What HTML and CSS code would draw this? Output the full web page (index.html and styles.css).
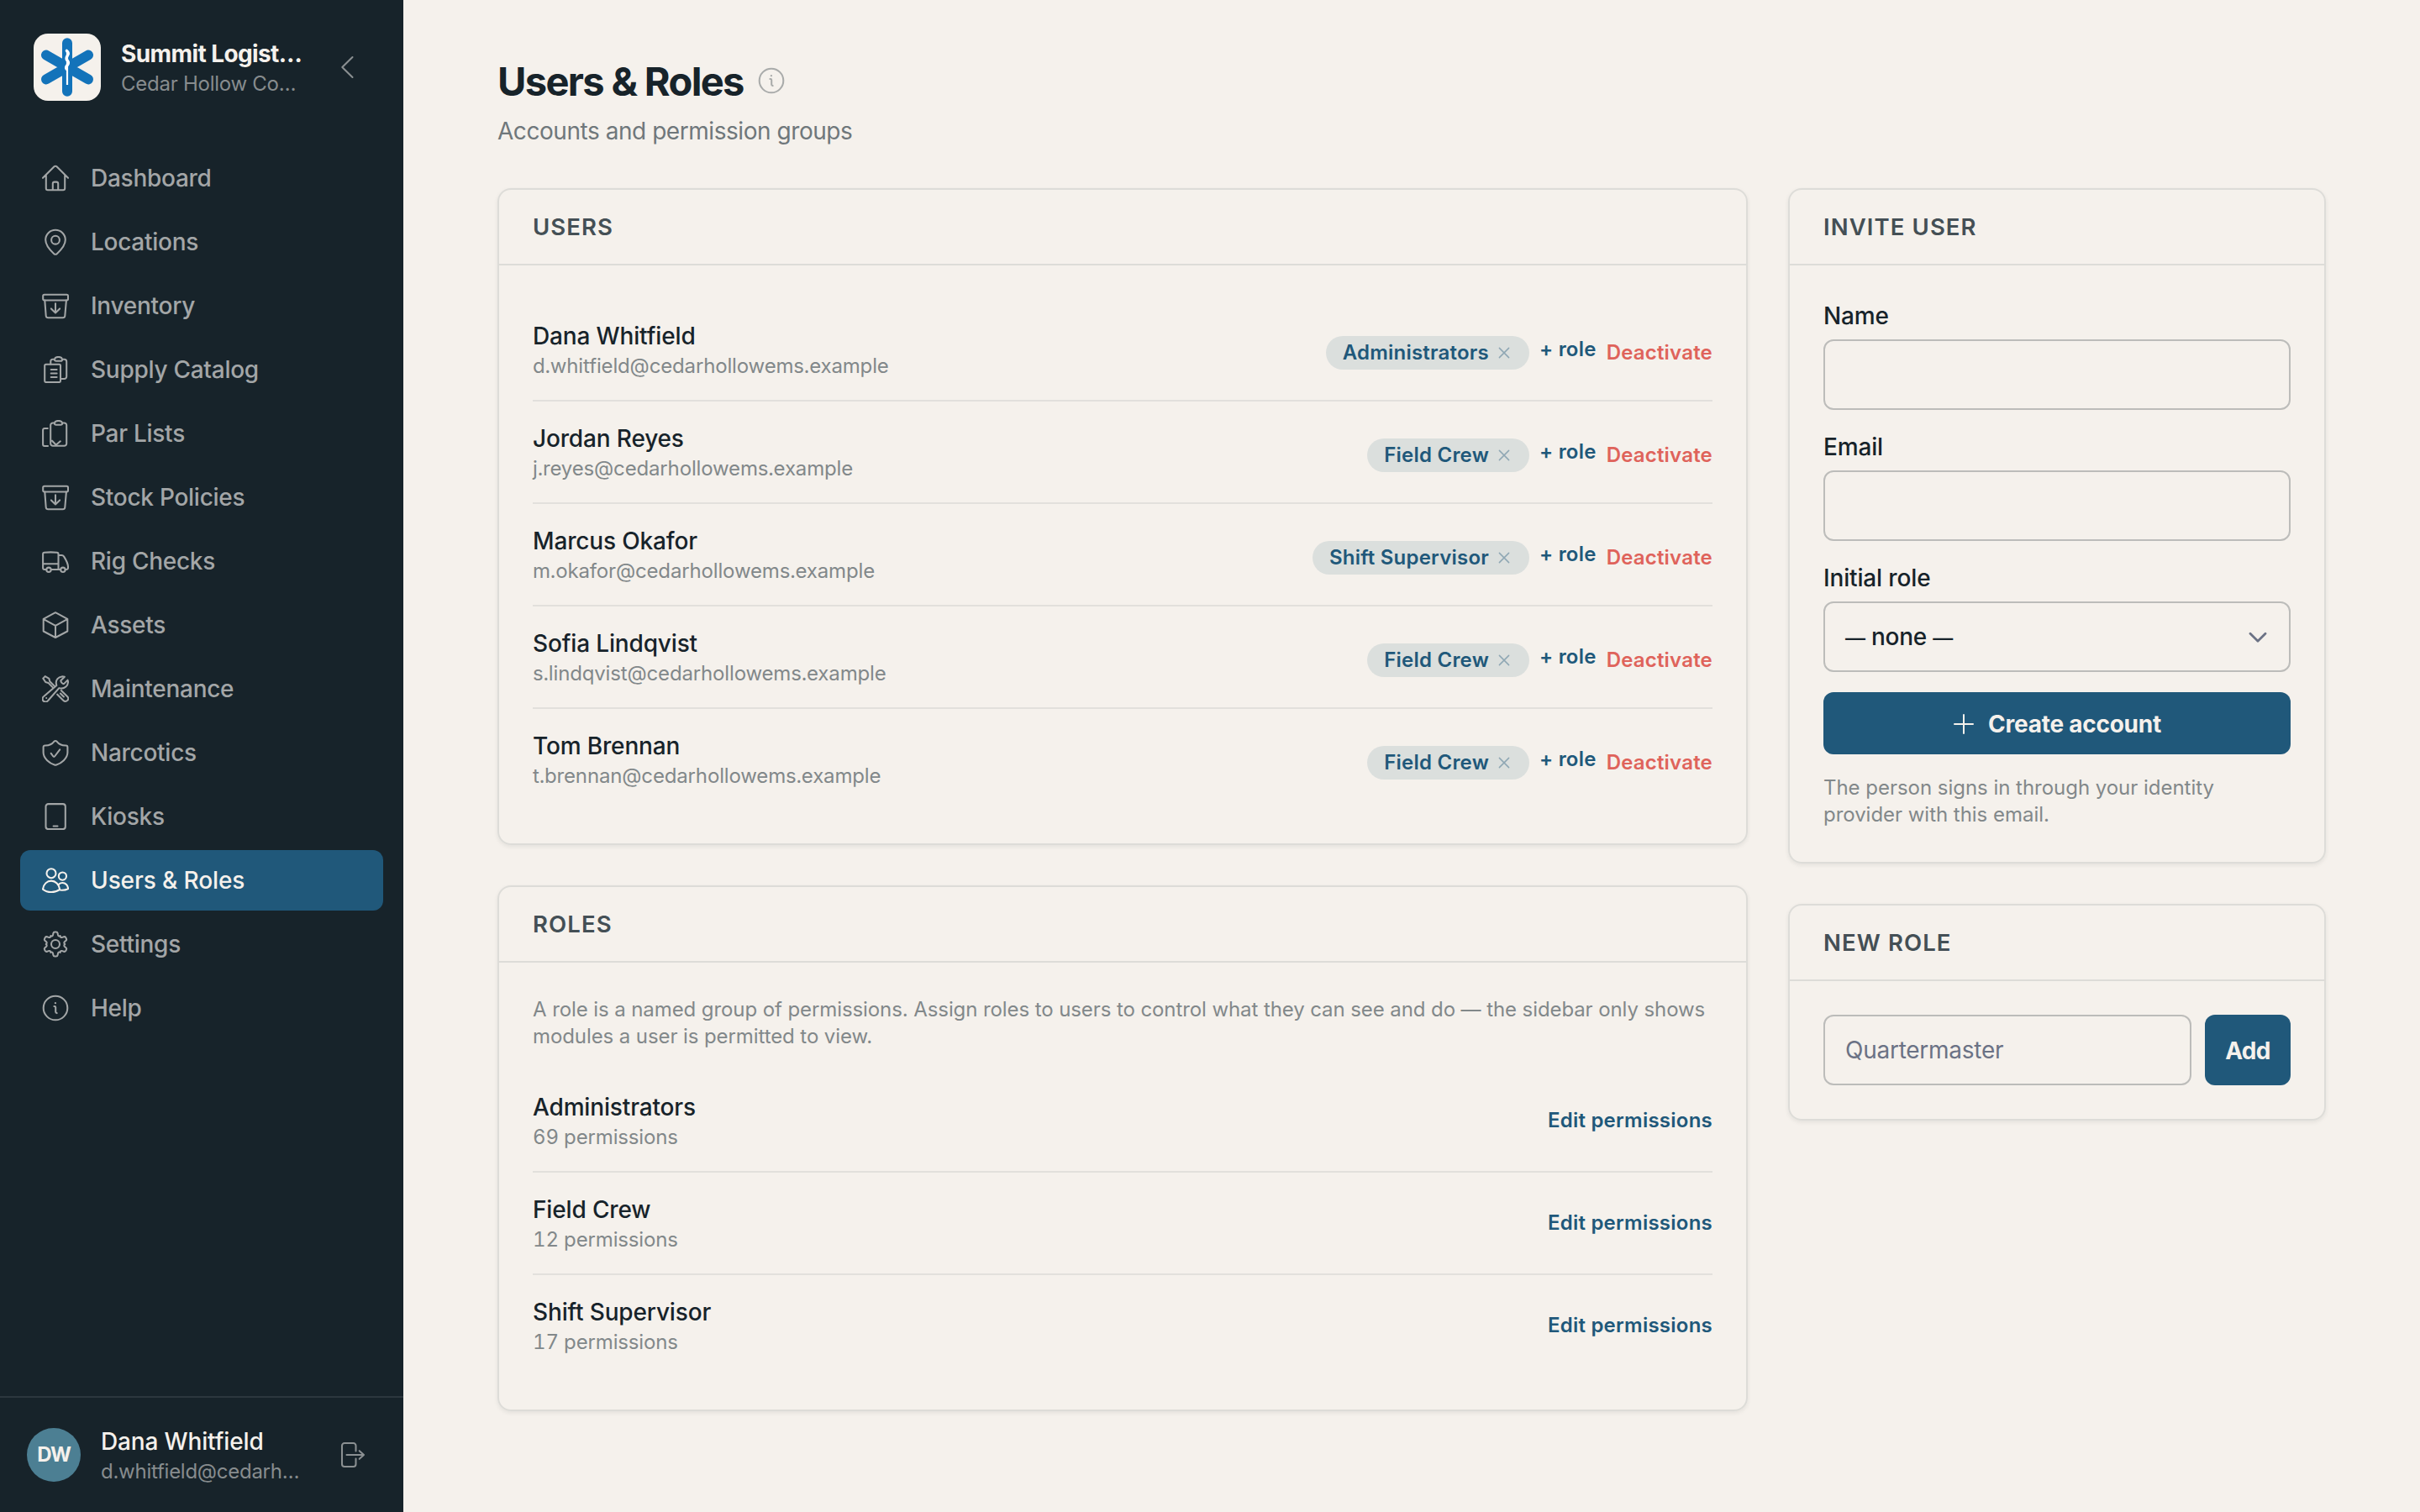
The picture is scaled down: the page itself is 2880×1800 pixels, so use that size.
FILE: index.html
```html
<!DOCTYPE html>
<html lang="en">
<head>
<meta charset="utf-8">
<title>Users &amp; Roles</title>
<link rel="stylesheet" href="styles.css">
</head>
<body>
<svg class="defs" aria-hidden="true">
  <symbol id="archive" viewBox="0 0 32 32"><rect x="1.2" y="2.8" width="29.8" height="6.6" rx="1.5"/><path d="M3.3 9.6 4.7 28a2.6 2.6 0 0 0 2.6 2.3h17.4a2.6 2.6 0 0 0 2.6-2.3L28.9 9.6M16 13.2v11M10.9 19.4l5.1 5 5.1-5"/></symbol>
  <symbol id="info" viewBox="0 0 32 32"><circle cx="16" cy="16" r="14.3"/><path d="M14.4 14H15a1.2 1.2 0 0 1 1.2 1.2v5.4a1.5 1.5 0 0 0 1.4 1.5"/><path d="M15.9 10.1v.1" stroke-width="2.3"/></symbol>
  <symbol id="close" viewBox="0 0 16 16"><path d="M2.4 2.4 13.6 13.6M13.6 2.4 2.4 13.6"/></symbol>
</svg>
<div class="app">
  <aside class="sidebar">
    <header class="brand">
      <svg class="logo" viewBox="0 0 80 80"><rect width="80" height="80" rx="17" fill="#f5f1ec"/><g stroke="#1373ba" stroke-width="12" stroke-linecap="round"><path d="M40 11.2v57.6M15 25.6l50 28.8M65 25.6 15 54.4"/></g><path d="M40 20v41" stroke="#fff" stroke-width="2.2"/><path d="M39.4 20.4c1.8 1.6 2.6 3.2 1.2 5.2s-2.4 4-.8 6 2.6 3.2.8 5.4-3 3.2-1.4 5.2" fill="none" stroke="#fff" stroke-width="3.4" stroke-linecap="round"/></svg>
      <div class="who">
        <div class="brand-name">Summit Logist…</div>
        <div class="sub">Cedar Hollow Co…</div>
      </div>
      <svg class="icon collapse" viewBox="0 0 32 32"><path d="M22.5 4 10.3 16l12.2 12"/></svg>
    </header>
    <nav class="nav">
      <a class="item"><svg class="icon" viewBox="0 0 32 32"><path d="M1 15.8 14.5 2.3a2.1 2.1 0 0 1 3 0L31 15.8M4.8 12.6v15.6a2 2 0 0 0 2 2h18.4a2 2 0 0 0 2-2V12.6M12.8 30v-7.4a2 2 0 0 1 2-2h2.4a2 2 0 0 1 2 2V30"/></svg>Dashboard</a>
      <a class="item"><svg class="icon" viewBox="0 0 32 32"><circle cx="16" cy="13.7" r="4.9"/><path d="M27.8 13.5c0 6.6-6.3 13.1-9.9 16.4a2.8 2.8 0 0 1-3.8 0C10.5 26.6 4.2 20.1 4.2 13.5a11.8 11.8 0 0 1 23.6 0z"/></svg>Locations</a>
      <a class="item"><svg class="icon"><use href="#archive"/></svg>Inventory</a>
      <a class="item"><svg class="icon" viewBox="0 0 32 32"><rect x="3.2" y="9.7" width="18.8" height="21.3" rx="1.5"/><path d="M10.7 16h6.9M10.7 20.5h6.9M10.7 25h6.9M10.3 9.5V6.2a2.5 2.5 0 0 1 2.5-2.5h2C15.3 2 17 .9 19.5.9S23.7 2 24.2 3.7h2.3a2.7 2.7 0 0 1 2.7 2.7v17.9a2.7 2.7 0 0 1-2.7 2.7H22M14.8 3.7c0 1.4.8 2.1 2.1 2.1h5.2c1.3 0 2.1-.7 2.1-2.1"/></svg>Supply Catalog</a>
      <a class="item"><svg class="icon" viewBox="0 0 32 32"><path d="M6.8 10H3a1.9 1.9 0 0 0-1.9 1.9V29A1.9 1.9 0 0 0 3 30.9h4M14.8 3.4h-1.9a2.7 2.7 0 0 0-2.7 2.7v22a2.7 2.7 0 0 0 2.7 2.7h13.6a2.7 2.7 0 0 0 2.7-2.7v-22a2.7 2.7 0 0 0-2.7-2.7h-2.3C23.7 1.9 22 .9 19.5.9s-4.2 1-4.7 2.5c0 1.6.8 2.3 2.1 2.3h5.2c1.3 0 2.1-.7 2.1-2.3M12 24.7l4.1 4.3a1 1 0 0 0 1.3 0l4.4-3.7"/></svg>Par Lists</a>
      <a class="item"><svg class="icon"><use href="#archive"/></svg>Stock Policies</a>
      <a class="item"><svg class="icon" viewBox="0 0 32 32"><path d="M4.9 26H3a1.9 1.9 0 0 1-1.9-1.9V7.7a1.9 1.9 0 0 1 1.7-1.9 65 65 0 0 1 15 0 1.9 1.9 0 0 1 1.7 1.9V26M11 26h10.8M1.1 19.2h18.4M19.5 8.9h3.9a3 3 0 0 1 2.6 1.5c2.7 4.3 5 8.6 5 12.6v1.1A1.9 1.9 0 0 1 29.1 26H28"/><circle cx="8" cy="26.3" r="2.7"/><circle cx="24.9" cy="26.3" r="2.7"/></svg>Rig Checks</a>
      <a class="item"><svg class="icon" viewBox="0 0 32 32"><path d="M16 1.2 30.3 8.9v14.6L16 31 1.7 23.5V8.9zM1.9 9.1 16 16.9l14.1-7.8M16 16.9V31"/></svg>Assets</a>
      <a class="item"><svg class="icon" viewBox="0 0 32 32"><path d="M23.6 1.4c-4.3.5-7.2 4.2-6.8 8 .1.9.2 1.7.5 2.5L2.2 25a3.6 3.6 0 1 0 5 5L20.3 15.1c.8.3 1.5.4 2.3.5 4.4.3 8.3-3.2 8.4-7.5 0-.9-.1-1.7-.5-2.5l-4.5 4.5c-1.7 0-3.7-1.9-3.7-3.9l4.5-4.4c-.9-.3-1.9-.5-3.2-.4zM1.3 3.6 3.7 1.1l4.7 2.8.9 3.4 5 4.9M1.3 3.6 4.2 8l3.2.9 4.9 5M18.2 22.7l7.3 7.2a3.3 3.3 0 0 0 4.7-4.7l-7.4-7.3M21.9 21.5l4 4M5.2 26.9v.1"/></svg>Maintenance</a>
      <a class="item"><svg class="icon" viewBox="0 0 32 32"><path d="M1.6 15.8V9.4a1.9 1.9 0 0 1 1.9-1.9c5.3.2 8.4-1.4 11-4.8a1.9 1.9 0 0 1 3 0c2.6 3.4 5.7 5 11 4.8a1.9 1.9 0 0 1 1.9 1.9v6.4c0 7.2-7.6 13-13.2 14.7a4 4 0 0 1-2.4 0C9.2 28.8 1.6 23 1.6 15.8zM10.7 16.8l2.7 3.7a1 1 0 0 0 1.6 0l6.2-8.2"/></svg>Narcotics</a>
      <a class="item"><svg class="icon" viewBox="0 0 32 32"><rect x="4.5" y="1.1" width="23.3" height="30" rx="3"/><path d="M13.6 27.4h4.9"/></svg>Kiosks</a>
      <a class="item active"><svg class="icon" viewBox="0 0 32 32"><circle cx="11" cy="7.7" r="5.5"/><circle cx="24.4" cy="11.1" r="4.6"/><path d="M1 26.6c.6-5.9 5-10 10-10s9.4 4.1 10.2 10.2C18.3 28.9 14.8 30 11 30S3.8 28.9 1 26.6zM20 20.7c1.3-1.2 2.7-1.7 4.4-1.7 3.6 0 6.5 3 6.7 7-2.6 1.5-6.3 2-9.8 1.6"/></svg>Users &amp; Roles</a>
      <a class="item"><svg class="icon" viewBox="-16 -16 32 32"><circle r="5"/><path id="cog" d="M-5.6-9.7c1.3.6 2.3-.1 2.6-1.3l.4-2a1.900 1.900 0 0 1 1.800-1.500h1.600a1.900 1.900 0 0 1 1.800 1.500l.4 2c.3 1.200 1.300 1.900 2.600 1.300"/><use href="#cog" transform="rotate(60)"/><use href="#cog" transform="rotate(120)"/><use href="#cog" transform="rotate(180)"/><use href="#cog" transform="rotate(240)"/><use href="#cog" transform="rotate(300)"/></svg>Settings</a>
      <a class="item"><svg class="icon"><use href="#info"/></svg>Help</a>
    </nav>
    <footer class="account">
      <div class="avatar">DW</div>
      <div class="who">
        <div class="account-name">Dana Whitfield</div>
        <div class="sub">d.whitfield@cedarh…</div>
      </div>
      <svg class="icon logout" viewBox="0 0 32 32"><path d="M19.5 11.5V5a3 3 0 0 0-3-3H6a3 3 0 0 0-3 3v22a3 3 0 0 0 3 3h10.5a3 3 0 0 0 3-3v-6.5M8.5 16H29M23.7 11.2 29 16l-5.3 4.8"/></svg>
    </footer>
  </aside>

  <main class="main">
    <div class="title-row"><h1>Users &amp; Roles</h1><svg class="icon title-info"><use href="#info"/></svg></div>
    <p class="lede">Accounts and permission groups</p>
    <div class="columns">
      <div class="stack">
        <section class="card">
          <h2>Users</h2>
          <div class="card-body">
            <div class="row"><div><div class="name">Dana Whitfield</div><div class="meta">d.whitfield@cedarhollowems.example</div></div><div class="actions"><span class="chip">Administrators<svg class="x"><use href="#close"/></svg></span><a class="add-role">+ role</a><a class="danger">Deactivate</a></div></div>
            <div class="row"><div><div class="name">Jordan Reyes</div><div class="meta">j.reyes@cedarhollowems.example</div></div><div class="actions"><span class="chip">Field Crew<svg class="x"><use href="#close"/></svg></span><a class="add-role">+ role</a><a class="danger">Deactivate</a></div></div>
            <div class="row"><div><div class="name">Marcus Okafor</div><div class="meta">m.okafor@cedarhollowems.example</div></div><div class="actions"><span class="chip">Shift Supervisor<svg class="x"><use href="#close"/></svg></span><a class="add-role">+ role</a><a class="danger">Deactivate</a></div></div>
            <div class="row"><div><div class="name">Sofia Lindqvist</div><div class="meta">s.lindqvist@cedarhollowems.example</div></div><div class="actions"><span class="chip">Field Crew<svg class="x"><use href="#close"/></svg></span><a class="add-role">+ role</a><a class="danger">Deactivate</a></div></div>
            <div class="row"><div><div class="name">Tom Brennan</div><div class="meta">t.brennan@cedarhollowems.example</div></div><div class="actions"><span class="chip">Field Crew<svg class="x"><use href="#close"/></svg></span><a class="add-role">+ role</a><a class="danger">Deactivate</a></div></div>
          </div>
        </section>
        <section class="card">
          <h2>Roles</h2>
          <div class="card-body">
            <p class="note intro">A role is a named group of permissions. Assign roles to users to control what they can see and do — the sidebar only shows modules a user is permitted to view.</p>
            <div class="row"><div><div class="name">Administrators</div><div class="meta">69 permissions</div></div><a class="edit">Edit permissions</a></div>
            <div class="row"><div><div class="name">Field Crew</div><div class="meta">12 permissions</div></div><a class="edit">Edit permissions</a></div>
            <div class="row"><div><div class="name">Shift Supervisor</div><div class="meta">17 permissions</div></div><a class="edit">Edit permissions</a></div>
          </div>
        </section>
      </div>
      <div class="stack">
        <section class="card">
          <h2>Invite user</h2>
          <form class="card-body form">
            <label class="field">Name<input class="input" type="text"></label>
            <label class="field">Email<input class="input" type="text"></label>
            <div class="field">Initial role<div class="input select"><span><span class="dash">—</span> none <span class="dash">—</span></span><svg class="chevron" viewBox="0 0 24 16"><path d="M3 3.2l9 9 9-9"/></svg></div></div>
            <button class="button" type="button"><svg class="plus" viewBox="0 0 24 24"><path d="M12 1v22M1 12h22"/></svg>Create account</button>
            <p class="note">The person signs in through your identity provider with this email.</p>
          </form>
        </section>
        <section class="card">
          <h2>New role</h2>
          <form class="card-body new-role"><input class="input" type="text" placeholder="Quartermaster"><button class="button add" type="button">Add</button></form>
        </section>
      </div>
    </div>
  </main>
</div>
</body>
</html>
```
FILE: styles.css
```css
:root {
  --ink: #17232a;
  --paper: #f5f1ec;
  --blue: #20587a;
  --line: #dddcd8;
  --muted: #82888a;
}

* { box-sizing: border-box; }
h1, h2, p { margin: 0; }

body {
  margin: 0;
  background: var(--paper);
  color: var(--ink);
  font: 500 28px/40px Inter, "Liberation Sans", sans-serif;
  letter-spacing: -0.15px;
}

.defs { display: none; }
.app { display: flex; height: 1800px; }

.icon {
  width: 32px;
  height: 32px;
  flex: none;
  fill: none;
  stroke: currentColor;
  stroke-width: 2.05;
  stroke-linecap: round;
  stroke-linejoin: round;
}

/* Sidebar */
.sidebar {
  display: flex;
  flex-direction: column;
  width: 480px;
  flex: none;
  background: var(--ink);
  color: var(--paper);
}

.brand { display: flex; align-items: center; height: 160px; padding: 0 51px 0 40px; }
.logo { width: 80px; height: 80px; flex: none; margin-right: 24px; }
.who { flex: 1; white-space: nowrap; }
.brand-name { font-weight: 700; line-height: 38px; letter-spacing: -0.6px; }
.brand .who { padding-top: 1px; }
.sub { color: #878c8e; font-size: 24px; font-weight: 400; line-height: 33px; letter-spacing: -0.26px; }
.collapse { color: #8b9092; }

.nav { display: flex; flex-direction: column; gap: 4px; padding: 16px 24px; flex: 1; }
.item {
  display: flex;
  align-items: center;
  gap: 26px;
  height: 72px;
  padding: 0 26px;
  border-radius: 12px;
  color: #a3a6a7;
  font-weight: 550;
  letter-spacing: -0.27px;
}
.item.active { background: var(--blue); color: var(--paper); letter-spacing: -0.1px; }

.account {
  display: flex;
  align-items: center;
  height: 138px;
  padding: 0 44px 0 32px;
  border-top: 2px solid #2c373e;
}
.avatar {
  display: grid;
  place-items: center;
  width: 64px;
  height: 64px;
  margin-right: 24px;
  border-radius: 50%;
  background: #4c7f93;
  font-size: 24px;
  font-weight: 700;
  letter-spacing: -1px;
}
.account-name { font-weight: 550; line-height: 38px; letter-spacing: -0.15px; }
.logout { color: #8b9092; }

/* Page */
.main { flex: 1; padding: 64px 112px; }
.title-row { display: flex; align-items: center; gap: 17px; height: 64px; }
h1 { font-size: 47px; font-weight: 700; line-height: 64px; letter-spacing: -1.65px; padding-top: 1px; }
.title-info { color: #a9abaa; }
.lede { margin: 8px 0 48px; color: #6f777b; font-weight: 400; letter-spacing: -0.45px; }

.columns { display: grid; grid-template-columns: 1488px 640px; gap: 48px; align-items: start; }
.stack { display: flex; flex-direction: column; gap: 48px; }

.card { border: 2px solid var(--line); border-radius: 16px; box-shadow: 0 2px 5px rgba(23, 35, 42, 0.08); }
h2 {
  height: 90px;
  padding-left: 40px;
  border-bottom: 2px solid var(--line);
  color: #444f55;
  font-size: 27.5px;
  font-weight: 600;
  line-height: 88px;
  letter-spacing: 1.1px;
  text-transform: uppercase;
}
.card-body { padding: 40px; }

.row { display: flex; align-items: center; justify-content: space-between; height: 122px; border-bottom: 2px solid #e2e0dc; }
.row:last-child { height: 120px; border-bottom: 0; }
.meta, .note { color: var(--muted); font-size: 24px; font-weight: 400; line-height: 32px; }
.meta { font-variant-numeric: tabular-nums; letter-spacing: -0.15px; }
.note { letter-spacing: -0.03px; }
.intro { margin-bottom: 24px; letter-spacing: -0.09px; }

.actions { display: flex; align-items: center; gap: 12px; margin-top: 8px; font-size: 24px; font-weight: 600; letter-spacing: 0.22px; }
.chip { display: flex; align-items: center; gap: 10px; padding: 0 22px 0 20px; border-radius: 20px; background: #dbdfdd; color: var(--blue); }
.x { width: 16px; height: 16px; fill: none; stroke: #8fa7b4; stroke-width: 1.5; stroke-linecap: round; }
.add-role { margin-bottom: 9px; color: var(--blue); }
.danger { color: #df635b; letter-spacing: 0.2px; }
.edit { color: var(--blue); font-size: 24px; font-weight: 600; letter-spacing: 0.24px; }

/* Forms */
.form { display: flex; flex-direction: column; gap: 24px; }
.field { display: flex; flex-direction: column; gap: 8px; }
.input {
  display: block;
  width: 100%;
  height: 84px;
  padding: 0 24px;
  border: 2px solid #bcbcba;
  border-radius: 12px;
  background: transparent;
  color: var(--ink);
  font: inherit;
  letter-spacing: -0.26px;
}
.input::placeholder { color: #6b7285; font-weight: 400; opacity: 1; }
.select { display: flex; align-items: center; justify-content: space-between; padding: 1px 25px 0 24px; }
.dash { font-size: 24px; }
.chevron { width: 24px; height: 16px; fill: none; stroke: #6b7285; stroke-width: 2.8; stroke-linecap: round; stroke-linejoin: round; }
.button {
  display: flex;
  align-items: center;
  justify-content: center;
  gap: 17px;
  height: 74px;
  padding: 1px 0 0 1px;
  border: 0;
  border-radius: 12px;
  background: var(--blue);
  color: var(--paper);
  font: inherit;
  font-weight: 650;
  letter-spacing: -0.25px;
}
.plus { width: 24px; height: 24px; fill: none; stroke: currentColor; stroke-width: 2; stroke-linecap: round; }
.new-role { display: flex; gap: 16px; }
.add { width: 102px; height: 84px; flex: none; padding: 2px 0 0; letter-spacing: -0.7px; }
```
